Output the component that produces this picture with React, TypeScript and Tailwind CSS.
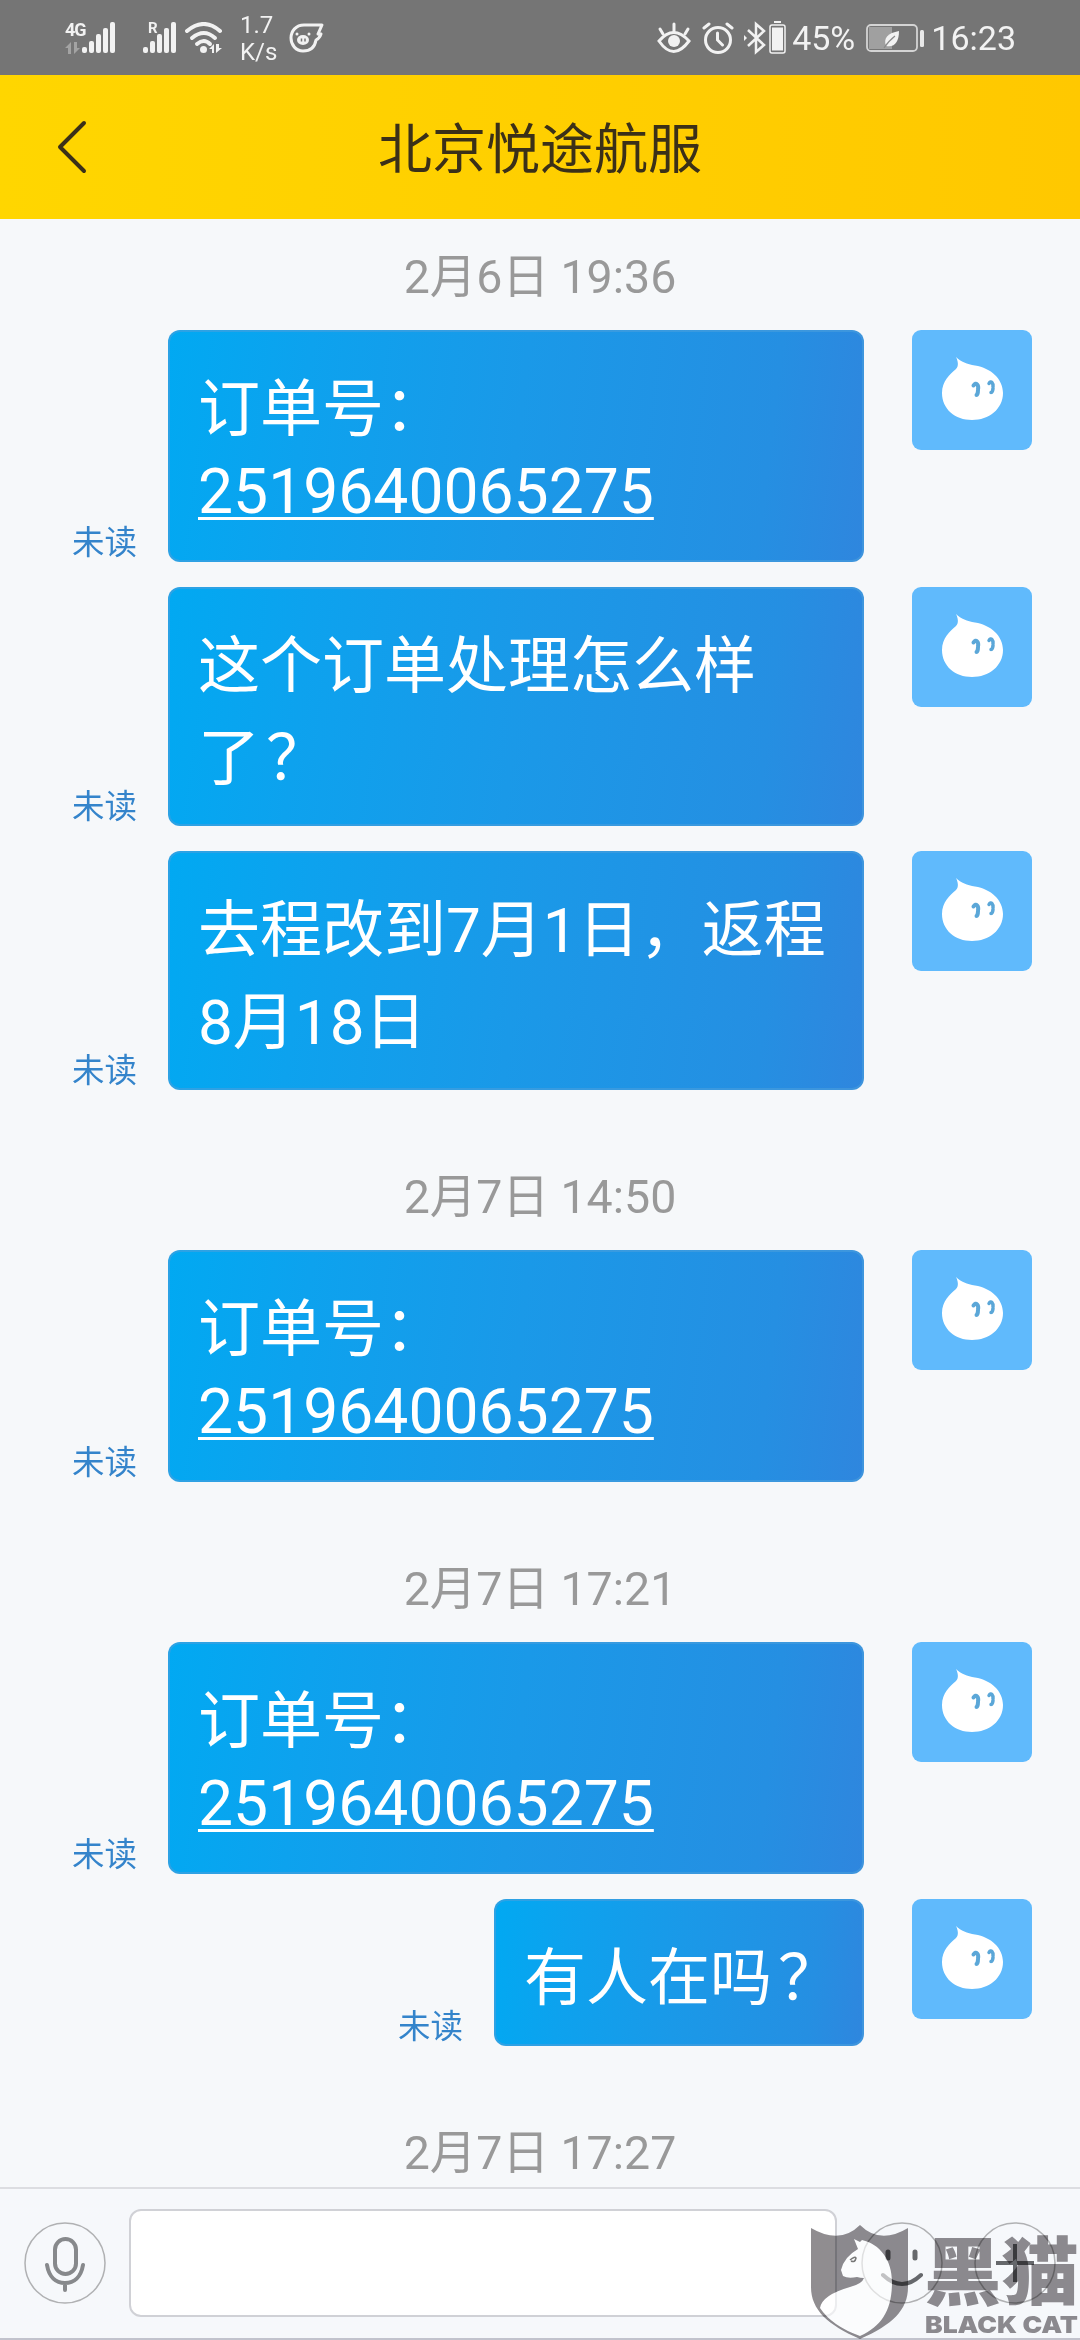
import { Fragment } from "react";

type Message = {
  lines: string[];
  orderNo?: string;
};

type Group = {
  time: string;
  messages: Message[];
};

const groups: Group[] = [
  {
    time: "2月6日 19:36",
    messages: [
      { lines: ["订单号："], orderNo: "2519640065275" },
      { lines: ["这个订单处理怎么样", "了？"] },
      { lines: ["去程改到7月1日，返程", "8月18日"] },
    ],
  },
  {
    time: "2月7日 14:50",
    messages: [{ lines: ["订单号："], orderNo: "2519640065275" }],
  },
  {
    time: "2月7日 17:21",
    messages: [
      { lines: ["订单号："], orderNo: "2519640065275" },
      { lines: ["有人在吗？"] },
    ],
  },
];

function SignalBars() {
  return (
    <svg width="34" height="32" viewBox="0 0 34 32" fill="#f2f2f2">
      <rect x="0" y="25" width="5" height="6" rx="2" />
      <rect x="7" y="19" width="5" height="12" rx="2" />
      <rect x="14" y="12" width="5" height="19" rx="2" />
      <rect x="21" y="6" width="5" height="25" rx="2" />
      <rect x="28" y="0" width="5" height="31" rx="2" />
    </svg>
  );
}

function StatusBar() {
  return (
    <div className="flex h-[75px] shrink-0 items-center bg-[#757575] text-[#f2f2f2]">
      <div className="ml-[65px] flex h-8 w-[17px] flex-col justify-between">
        <span className="text-[18px] leading-[15px] font-bold tracking-[-1px]">4G</span>
        <svg width="15" height="12" viewBox="0 0 15 12" fill="#a3a3a3">
          <path d="M6 0v12H3V6H0zM9 0v12l6-6h-3V0z" />
        </svg>
      </div>
      <SignalBars />
      <div className="ml-8 flex h-8 w-0 items-start">
        <span className="text-[15px] leading-[13px] font-bold">R</span>
      </div>
      <div className="-ml-[5px]">
        <SignalBars />
      </div>
      <svg className="ml-2" width="38" height="32" viewBox="0 0 38 32" fill="none" stroke="#f2f2f2" strokeWidth="4" strokeLinecap="round">
        <path d="M2 9Q19-5 35 9" />
        <path d="M7 16Q19 6 30 16" />
        <path d="M12 22Q19 16 25 22" />
        <circle cx="18.500" cy="27.500" r="3.500" fill="#f2f2f2" stroke="none" />
        <path d="M29 22v9h-2v-4h-3zM31 22v9l6-5h-3v-4z" fill="#f2f2f2" stroke="none" />
      </svg>
      <div className="ml-[17px] flex w-9 flex-col pt-[3px] text-[24px] leading-[27px]">
        <span>1.7</span>
        <span>K/s</span>
      </div>
      <svg className="ml-[13px]" width="36" height="32" viewBox="0 0 36 32" fill="none" stroke="#f2f2f2" strokeWidth="3">
        <path d="M33 3H15C7 3 2 9 2 16s5 13 12 13c8 0 12-5 13-11 2-1 4-3 5-6h-3z" strokeLinejoin="round" />
        <ellipse cx="14" cy="18" rx="6" ry="5" fill="#f2f2f2" stroke="none" />
        <path d="M12.500 16.500v3M16 16.500v3" stroke="#757575" strokeWidth="1.500" />
        <circle cx="8" cy="12" r="1.500" fill="#f2f2f2" stroke="none" />
        <circle cx="20" cy="12" r="1.500" fill="#f2f2f2" stroke="none" />
      </svg>

      <div className="mr-[64px] ml-auto flex items-center">
        <svg width="34" height="32" viewBox="0 0 34 32" fill="none" stroke="#f2f2f2" strokeWidth="3" strokeLinecap="round">
          <path d="M2 19Q16.500 2 32 19Q16.500 40 2 19z" />
          <path d="M17 2v7M3 7l3 5M31 7l-3 5" />
          <circle cx="17" cy="19" r="6" fill="#f2f2f2" stroke="none" />
        </svg>
        <svg className="ml-[11px]" width="32" height="32" viewBox="0 0 32 32" fill="none" stroke="#f2f2f2" strokeWidth="3" strokeLinecap="round">
          <circle cx="16" cy="18" r="12.500" />
          <path d="M15.500 11v7l5 5M2 6l5-4M30 6l-5-4" />
        </svg>
        <svg className="ml-[10px]" width="22" height="34" viewBox="0 0 22 34" fill="none" stroke="#f2f2f2" strokeWidth="2.500">
          <path d="M4 9l16 15-8 7V3l8 7L4 25" />
          <path d="M0 14l3 3-3 3z" fill="#f2f2f2" stroke="none" />
        </svg>
        <svg className="ml-[3px]" width="17" height="34" viewBox="0 0 17 34">
          <rect x="5" y="0" width="7" height="2" fill="#f2f2f2" />
          <rect x="1" y="4" width="15" height="28" rx="2" fill="none" stroke="#f2f2f2" strokeWidth="1.500" />
          <rect x="3" y="6.500" width="11" height="23" fill="#f2f2f2" />
        </svg>
        <span className="ml-[6px] w-[67px] text-[34px] leading-none tracking-[-0.2px]">45%</span>
        <svg className="ml-[7px]" width="59" height="30" viewBox="0 0 59 30">
          <rect x="3" y="4" width="23" height="22" fill="#a0a0a0" />
          <rect x="1" y="2" width="50" height="26" rx="4" fill="none" stroke="#d4d4d4" strokeWidth="1.800" />
          <rect x="54" y="7" width="4" height="17" rx="1.500" fill="#e8e8e8" />
          <path d="M33 8C22 10 17 15 20 23c9 2 13-5 13-15z" fill="#f2f2f2" />
          <path d="M18 25c3-5 6-8 11-12" stroke="#8a8a8a" strokeWidth="1.200" fill="none" />
        </svg>
        <span className="ml-[6px] text-[34px] leading-none">16:23</span>
      </div>
    </div>
  );
}

function Header() {
  return (
    <div className="flex h-36 shrink-0 items-center bg-linear-to-r from-[#ffd600] to-[#ffc800] text-[#3b3018]">
      <svg className="ml-[56px]" width="32" height="56" viewBox="0 0 32 56" fill="none" stroke="#3b3018" strokeWidth="4" strokeLinecap="round" strokeLinejoin="round">
        <path d="M28 4L4 28l24 24" />
      </svg>
      <h1 className="mr-[88px] flex-1 pt-2 text-center text-[54px] leading-none">北京悦途航服</h1>
    </div>
  );
}

function Avatar() {
  return (
    <div className="size-[120px] shrink-0 overflow-hidden rounded-[9px] bg-[#60bafc]">
      <svg width="120" height="120" viewBox="0 0 120 120">
        <path d="M44 27C49 32 55 34 63 35.500C79 38 91 49 91 63C91 79 77 90 60 90C43 90 30 79 30 63C30 51 38 44 44 39C47 36 46 31 44 27z" fill="#fff" />
        <path d="M61.500 55.500C64 51.500 67 55 66 59.500M66 60C66 63 65 65 64.500 65" fill="none" stroke="#5ba7d8" strokeWidth="4" strokeLinecap="round" />
        <path d="M77 53.500C79 50 81.500 53 81 57M81 58C81 60.500 80 62.500 79 62.500" fill="none" stroke="#5ba7d8" strokeWidth="3.500" strokeLinecap="round" />
      </svg>
    </div>
  );
}

function MessageRow({ message }: { message: Message }) {
  const multiline = message.lines.length > 1 || message.orderNo;

  return (
    <div className="flex items-start justify-end pr-12">
      <div className="flex items-end">
        <span className="mr-[31px] mb-[3px] text-[32.500px] leading-8 text-[#3484cb]">未读</span>
        <div
          className={`mr-12 rounded-xl border-2 border-[#4a9fdc]/60 bg-[linear-gradient(97deg,#01a9f2_0%,#0da2ee_20%,#1a99e8_50%,#258fe2_85%,#2f86de_100%)] bg-origin-border px-7 pt-8 pb-[19px] text-[62px] text-white ${
            multiline ? "w-[696px]" : ""
          }`}
        >
          {message.lines.map((line) => (
            <div key={line} className="leading-[92px] whitespace-nowrap">
              {line.endsWith("？") ? (
                <>
                  {line.slice(0, -1)}
                  <span className="-mr-[6px] pl-[6px]">？</span>
                </>
              ) : (
                line
              )}
            </div>
          ))}
          {message.orderNo && (
            <div className="mb-[14px] text-[62.4px] leading-[71px]">
              <span className="underline decoration-[3px] underline-offset-[4px]">{message.orderNo}</span>
            </div>
          )}
        </div>
      </div>
      <Avatar />
    </div>
  );
}

function Timestamp({ children }: { children: string }) {
  return <div className="text-center text-[46.5px] leading-[56px] text-[#999999]">{children}</div>;
}

function InputBar() {
  return (
    <div className="flex h-[153px] shrink-0 items-center border-t-2 border-b-2 border-t-[#dcdde1] border-b-[#c2c3cd] bg-[#f6f8fb] pb-[1px] pl-6">
      <svg width="82" height="82" viewBox="0 0 82 82" fill="none" stroke="#87898c" strokeWidth="4" strokeLinecap="round">
        <circle cx="41" cy="41" r="40" stroke="#b0b1b3" strokeWidth="1.500" />
        <rect x="31" y="17" width="21" height="35" rx="10.500" />
        <path d="M23 43c2 12 9 18 18 18s16-6 18-18M41 62v6" />
      </svg>
      <div className="ml-[23px] h-[108px] w-[708px] rounded-xl border-2 border-[#d0d1d6] bg-white" />
      <svg className="ml-6" width="82" height="82" viewBox="0 0 82 82" fill="none" stroke="#66686c" strokeWidth="5" strokeLinecap="round">
        <circle cx="41" cy="41" r="40" stroke="#b0b1b3" strokeWidth="1.500" />
        <path d="M27 30v6M54 30v6" />
        <path d="M22 53q19 18 38 0" strokeWidth="4" />
      </svg>
      <svg className="ml-[31px]" width="82" height="82" viewBox="0 0 82 82" fill="none" stroke="#66686c" strokeWidth="4">
        <circle cx="41" cy="41" r="40" stroke="#b0b1b3" strokeWidth="1.500" />
        <path d="M41 22v38M22 41h38" />
      </svg>
    </div>
  );
}

// translucent brand stamp over the bottom right corner
function Watermark() {
  return (
    <svg className="absolute right-0 bottom-0" width="280" height="120" viewBox="0 0 280 120">
      <path
        d="M54 19L58 29Q44 37 41 50L43 56Q48 59 57 57Q60 58 64 58Q62 64 50 67Q22 75 20 88Q32 106 60 116C82 106 92 90 92 62C92 40 80 24 62 20L60 22z"
        fill="#fff"
        fillOpacity="0.6"
      />
      <g fill="#908d90" className="mix-blend-multiply">
        <path
          fillRule="evenodd"
          d="M11 8Q40 25 60 5Q80 25 108 8V67C108 90 92 105 60 119C28 105 11 90 11 67zM54 19L58 29Q44 37 41 50L43 56Q48 59 57 57Q60 58 64 58Q62 64 50 67Q22 75 20 88Q32 106 60 116C82 106 92 90 92 62C92 40 80 24 62 20L60 22z"
        />
        <text x="124" y="79" fontSize="74" fontWeight="900" textLength="155" lengthAdjust="spacingAndGlyphs">
          黑猫
        </text>
        <text x="125" y="113" fontSize="23" fontWeight="900" fontFamily="Inter, sans-serif" textLength="153" lengthAdjust="spacingAndGlyphs">
          BLACK CAT
        </text>
      </g>
      <path d="M50 40q5-4 6-2-1 5-5 3" stroke="#777" strokeWidth="1.500" fill="none" />
    </svg>
  );
}

export default function App() {
  return (
    <div className="relative flex h-[2340px] w-[1080px] flex-col overflow-hidden bg-[#f6f8fa] font-[Roboto,'Noto_Sans_CJK_SC',sans-serif]">
      <StatusBar />
      <Header />
      <div className="flex min-h-0 flex-1 flex-col overflow-hidden pt-[30px]">
        {groups.map((group) => (
          <Fragment key={group.time}>
            <Timestamp>{group.time}</Timestamp>
            <div className="mt-[25px] mb-[79px] flex flex-col gap-[25px]">
              {group.messages.map((message, i) => (
                <MessageRow key={i} message={message} />
              ))}
            </div>
          </Fragment>
        ))}
        <Timestamp>2月7日 17:27</Timestamp>
      </div>
      <InputBar />
      <Watermark />
    </div>
  );
}
